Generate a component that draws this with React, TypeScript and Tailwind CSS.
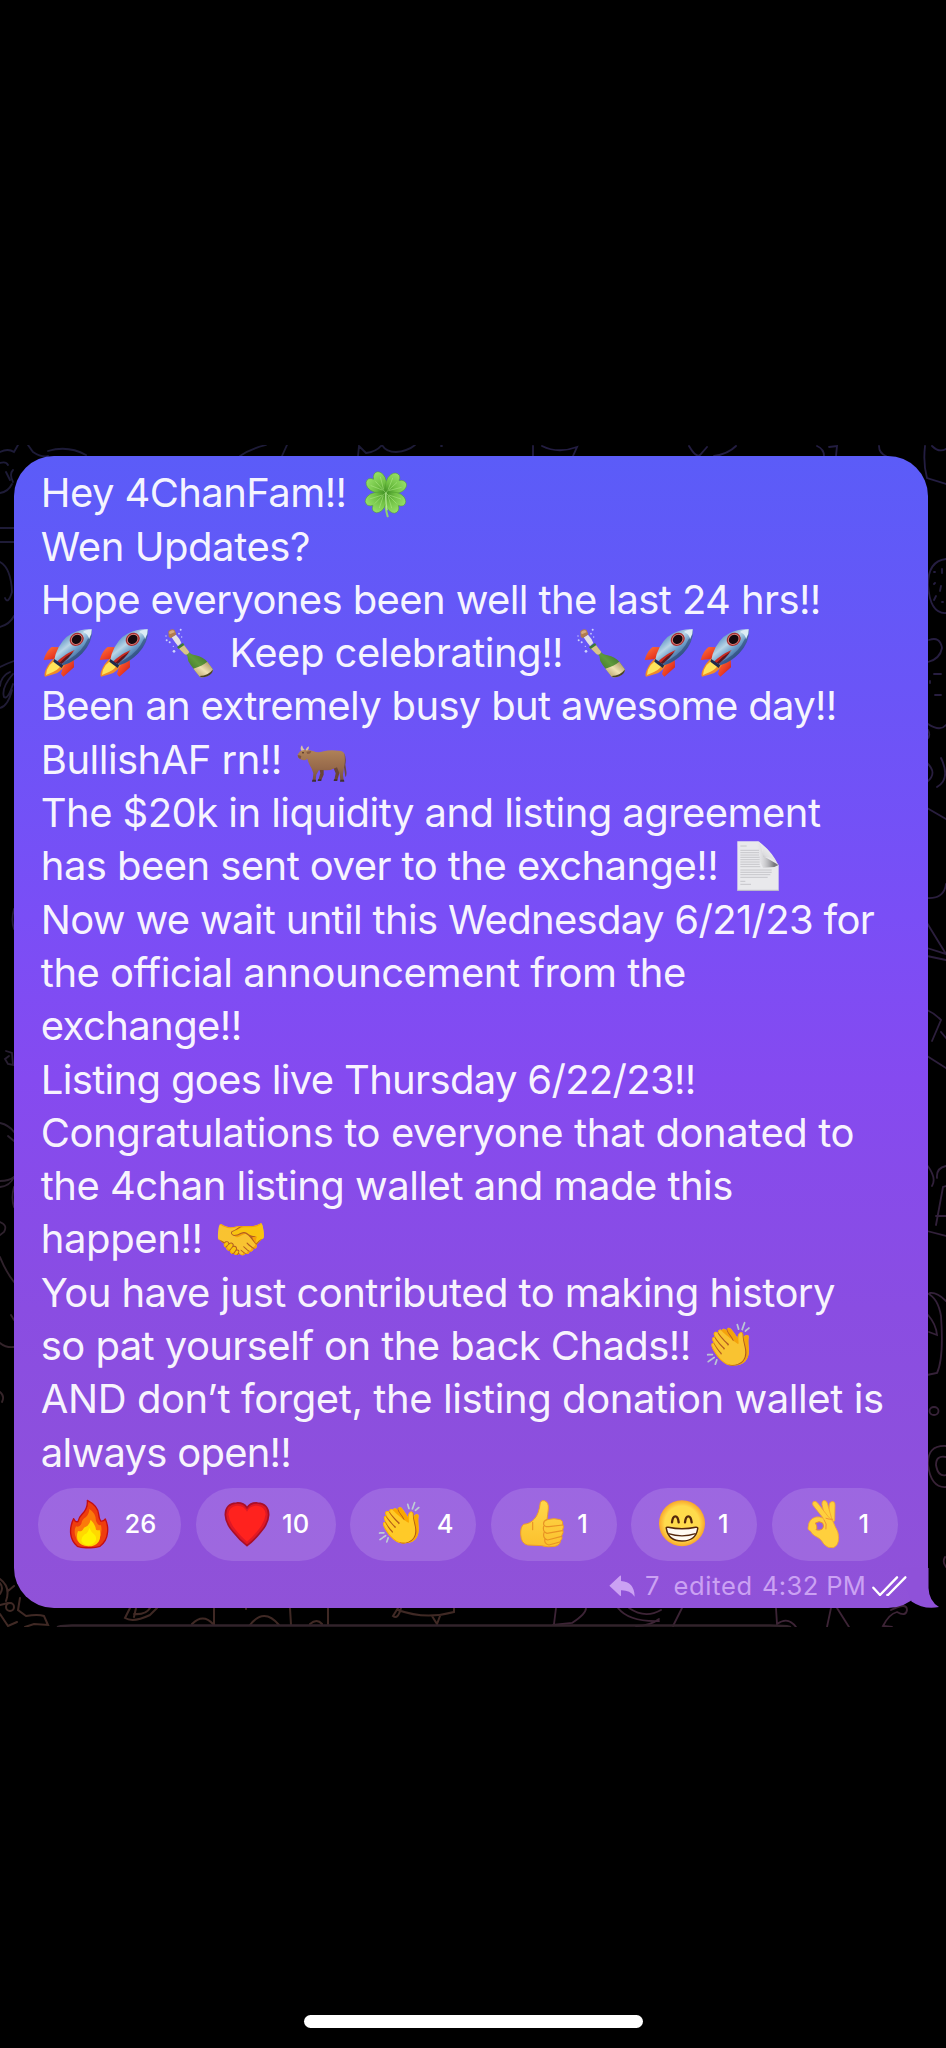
import type { ReactNode } from "react";
import clsx from "clsx";

type IconProps = { className?: string };

function Emoji({ char, className }: { char: string; className?: string }) {
  return (
    <span
      className={clsx(
        "flex h-[50px] w-[50px] shrink-0 items-center justify-center font-['Noto_Color_Emoji',sans-serif] text-[41px] leading-none",
        className,
      )}
    >
      {char}
    </span>
  );
}

function Glyph({ className, children }: IconProps & { children: ReactNode }) {
  return (
    <svg viewBox="0 0 150 150" className={clsx("h-[50px] w-[50px] shrink-0", className)}>
      {children}
    </svg>
  );
}

function Clover({ className }: IconProps) {
  return (
    <Glyph className={className}>
      <defs>
        <radialGradient id="leaf" cx="0.5" cy="1" r="1">
          <stop offset="0" stopColor="#3f8f22" />
          <stop offset="0.45" stopColor="#6fc043" />
          <stop offset="1" stopColor="#93de64" />
        </radialGradient>
      </defs>
      <path d="M75 74Q70 115 80 145" stroke="#8fd46a" strokeWidth="6" strokeLinecap="round" fill="none" />
      {["rotate(-42 74 74)", "rotate(48 74 74)", "rotate(135 74 74)", "rotate(-135 74 74)"].map((t) => (
        <g key={t} transform={t}>
          <path d="M74 74Q42 52 44 26Q48 6 64 9Q71 12 74 20Q78 12 86 9Q102 6 105 26Q106 52 74 74Z" fill="url(#leaf)" stroke="#4d9c2c" strokeWidth="1.5" />
          <path d="M74 72V28M72 62L55 28M76 62L94 28" stroke="#b5ee8c" strokeWidth="2" opacity="0.7" />
        </g>
      ))}
      <path d="M75 74Q73 100 78 125" stroke="#b4e894" strokeWidth="4" strokeLinecap="round" fill="none" />
    </Glyph>
  );
}

function Rocket({ className }: IconProps) {
  return (
    <Glyph className={className}>
      <defs>
        <linearGradient id="hull" x1="0.25" y1="0.2" x2="0.75" y2="0.8">
          <stop offset="0" stopColor="#5d93c4" />
          <stop offset="0.35" stopColor="#b9d5e6" />
          <stop offset="0.6" stopColor="#6fa0cb" />
          <stop offset="1" stopColor="#2b4d86" />
        </linearGradient>
        <linearGradient id="fin" x1="0" y1="0" x2="1" y2="1">
          <stop offset="0" stopColor="#ff7a3c" />
          <stop offset="0.6" stopColor="#ea3a22" />
          <stop offset="1" stopColor="#a81e18" />
        </linearGradient>
      </defs>
      <path d="M2 96Q10 68 26 57L62 58L36 93Z" fill="url(#fin)" />
      <path d="M92 88L93 118L61 146L54 138L62 110Z" fill="url(#fin)" />
      <path d="M33 92L62 98L65 112Q52 134 34 138L6 146Q2 140 8 126Q17 104 33 92Z" fill="#f08b28" />
      <path d="M36 97L58 103Q50 125 30 132L9 141Q10 124 20 111Z" fill="#ffe35a" />
      <path d="M146 4Q118 1 88 16Q55 32 38 78L34 95L60 112Q104 98 128 62Q148 34 146 4Z" fill="url(#hull)" />
      <path d="M146 4Q150 42 118 76Q92 102 60 112L58 104Q104 84 124 52Q138 30 146 4Z" fill="#274172" opacity="0.55" />
      <path d="M146 4Q126 6 120 12Q136 18 138 34Q147 20 146 4Z" fill="#dcecf5" />
      <path d="M95 66Q78 88 45 110L39 104Q62 80 95 66Z" fill="#c9281f" />
      <path d="M92 71Q76 92 56 108L50 104Q68 84 92 71Z" fill="#5b1620" />
      <path d="M34 93L61 112L56 120L31 101Z" fill="#1f2a4c" />
      <ellipse cx="101" cy="34" rx="22" ry="19" transform="rotate(-35 101 34)" fill="#a92e30" />
      <ellipse cx="101" cy="34" rx="18" ry="15" transform="rotate(-35 101 34)" fill="#e28f84" />
      <ellipse cx="101" cy="34" rx="15.5" ry="13" transform="rotate(-35 101 34)" fill="#15090e" />
    </Glyph>
  );
}

function Bottle({ className }: IconProps) {
  return (
    <Glyph className={className}>
      <defs>
        <linearGradient id="glass" x1="0" y1="1" x2="1" y2="0">
          <stop offset="0" stopColor="#1f4a1b" />
          <stop offset="0.5" stopColor="#5f9a3c" />
          <stop offset="1" stopColor="#1f4a1b" />
        </linearGradient>
        <linearGradient id="label" x1="0" y1="1" x2="1" y2="0">
          <stop offset="0" stopColor="#a8905a" />
          <stop offset="0.5" stopColor="#efe2b2" />
          <stop offset="1" stopColor="#9c8450" />
        </linearGradient>
      </defs>
      <path d="M38 58 L54 47 L70 70 Q77 80 92 82 Q114 86 128 103 L143 123 Q146 130 132 141 Q112 152 104 146 L77 111 Q67 98 67 84 Q63 80 57 76Z" fill="url(#glass)" />
      <path d="M38 58 L54 47 L73 72 Q67 84 58 78Z" fill="#d8c48a" />
      <path d="M36 57 L54 45 L58 51 L41 63Z" fill="#3c7a34" />
      <path d="M85 122 Q111 114 127 101 L143 123 Q145 131 131 142 Q112 152 104 146Z" fill="url(#label)" />
      <path d="M104 144 Q130 142 143 125 Q145 136 127 145 Q109 151 104 144Z" fill="#4d4425" />
      <path d="M20 28 L33 20 Q45 32 49 45 L39 54 Q28 41 20 28Z" fill="#e4e1e5" />
      <path d="M10 10 Q19 0 29 6 L34 19 L17 31 L11 26Z" fill="#b07a4e" />
      <path d="M12 12 Q20 4 27 8 L29 13 L14 19Z" fill="#d7aa7c" />
      <g fill="#cdd3fb">
        <circle cx="47" cy="5" r="3" /><circle cx="42" cy="17" r="2.5" /><circle cx="50" cy="27" r="2" />
        <circle cx="5" cy="37" r="3" /><circle cx="14" cy="43" r="3" /><circle cx="27" cy="70" r="4" />
        <circle cx="25" cy="55" r="2" /><circle cx="3" cy="24" r="2" />
      </g>
    </Glyph>
  );
}

function Ox({ className }: IconProps) {
  return (
    <Glyph className={className}>
      <defs>
        <linearGradient id="hide" x1="0" y1="0" x2="0" y2="1">
          <stop offset="0" stopColor="#b08258" />
          <stop offset="0.6" stopColor="#96694a" />
          <stop offset="1" stopColor="#77503b" />
        </linearGradient>
      </defs>
      <path d="M66 100L70 118L64 138H73L80 122V98ZM108 98L116 118L112 138H121L127 118V96Z" fill="#6a4535" />
      <path d="M141 58Q149 70 145 92L148 112Q150 124 145 129L141 100Z" fill="#6f4a3a" />
      <path d="M3 60Q8 50 18 48Q36 46 50 52Q62 58 80 52Q100 46 124 50Q143 50 143 64Q145 84 141 100L138 122L140 139H130L128 120L120 100Q98 112 78 108L66 108L58 122L56 139H47L49 118L44 104Q34 88 31 74Q22 84 6 73Q0 68 3 60Z" fill="url(#hide)" />
      <path d="M13 50Q8 42 15 34Q17 43 23 48ZM30 50Q37 46 36 37Q29 39 26 47Z" fill="#d9c3a4" />
      <path d="M2 64Q8 62 13 67L11 74Q4 75 2 64Z" fill="#7d5443" />
      <path d="M28 53L43 51Q41 61 31 60Z" fill="#875b42" />
      <circle cx="18" cy="56" r="2.2" fill="#2a1711" />
      <path d="M46 137H57V143H45ZM130 137H141L142 143H129ZM63 136H73V141H62ZM111 136H121V141H110Z" fill="#40302e" />
    </Glyph>
  );
}

function Page({ className }: IconProps) {
  return (
    <svg viewBox="0 0 126 150" className={clsx("h-[50px] w-[42px] shrink-0", className)}>
      <defs>
        <linearGradient id="curl" x1="0.1" y1="1" x2="0.7" y2="0.2">
          <stop offset="0" stopColor="#8d8d93" />
          <stop offset="0.5" stopColor="#dddde0" />
          <stop offset="1" stopColor="#f8f8f8" />
        </linearGradient>
        <linearGradient id="shade" x1="1" y1="0.7" x2="0.1" y2="0.7">
          <stop offset="0.2" stopColor="#77777c" />
          <stop offset="1" stopColor="#e6e6e8" stopOpacity="0" />
        </linearGradient>
      </defs>
      <path d="M1 1H64Q92 20 125 73V149H1Z" fill="#e9e9ec" />
      <g stroke="#b5b5ba" strokeWidth="2">
        <path d="M10 15H29M10 28H66M10 35H66M10 42H66M10 49H68M10 56H68M10 63H68M10 70H68M10 77H70M10 87H104M10 94H104M10 101H100M10 109H92M10 121H25M10 130H42" />
      </g>
      <path d="M50 1H68L80 46L125 72L112 78L78 80Q60 50 50 1Z" fill="url(#shade)" />
      <path d="M62 1Q80 12 78 48Q110 46 125 74Q102 26 62 1Z" fill="url(#curl)" />
      <path d="M1 148H125" stroke="#b9b9c3" strokeWidth="3" />
    </svg>
  );
}

function Fire() {
  return (
    <Glyph>
      <path d="M70 4Q102 20 104 46Q105 58 110 66Q118 68 124 60Q134 82 130 104Q128 126 108 142Q94 147 73 146Q52 147 40 142Q22 126 20 104Q18 80 29 59Q34 70 42 68Q44 56 54 46Q72 28 70 4Z" fill="#ee3d0e" stroke="#c40e12" strokeWidth="4" strokeLinejoin="round" />
      <path d="M76 30Q96 42 96 66Q103 82 111 78Q116 104 104 124Q96 140 73 142Q40 140 33 108Q30 92 36 82Q46 86 52 74Q54 60 66 54Q76 44 76 30Z" fill="#fb7a0b" />
      <path d="M80 62Q94 76 96 92Q104 96 107 92Q112 114 104 128Q94 142 73 142Q50 141 42 126Q36 112 42 96Q54 100 60 86Q76 82 80 62Z" fill="#ffd800" />
      <path d="M76 86Q82 100 90 106Q98 112 96 124Q90 138 73 139Q54 138 52 124Q54 112 62 106Q72 104 76 86Z" fill="#fff200" />
    </Glyph>
  );
}

function Heart() {
  return (
    <Glyph>
      <path d="M75 26Q86 10 107 12Q139 14 140 47Q139 74 116 99Q98 122 75 140Q52 122 34 99Q11 74 10 47Q11 14 43 12Q64 10 75 26Z" fill="#df1825" stroke="#a90f27" strokeWidth="5" />
      <path d="M75 38Q84 19 105 20Q129 22 131 46Q128 70 108 94Q94 112 75 128Q56 112 42 94Q22 70 19 46Q21 22 45 20Q66 19 75 38Z" fill="#ff221e" />
    </Glyph>
  );
}

function Thumb() {
  return (
    <Glyph>
      <defs>
        <linearGradient id="skin" x1="0" y1="0" x2="0" y2="1">
          <stop offset="0" stopColor="#ffd84a" />
          <stop offset="1" stopColor="#fbc02d" />
        </linearGradient>
      </defs>
      <path d="M70 10Q74 3 82 5Q96 9 94 30Q92 48 90 62Q112 56 130 62Q139 66 137 76Q142 83 137 92Q141 100 134 110Q138 118 130 126Q130 138 114 142Q92 146 74 140L32 138Q12 134 11 106Q10 84 20 76Q40 74 52 60Q66 46 70 10Z" fill="url(#skin)" stroke="#ee9b2b" strokeWidth="3" />
      <path d="M47 70V92M90 62Q78 66 80 76Q82 84 96 83L137 78M80 82Q76 98 90 103L136 95M81 101Q76 118 92 123L134 112M84 119Q80 134 96 138L128 129" fill="none" stroke="#e89324" strokeWidth="3.5" strokeLinecap="round" />
    </Glyph>
  );
}

function Grin() {
  return (
    <Glyph>
      <defs>
        <radialGradient id="face">
          <stop offset="0.75" stopColor="#ffdb4c" />
          <stop offset="1" stopColor="#f9a62b" />
        </radialGradient>
      </defs>
      <circle cx="75" cy="73" r="69" fill="url(#face)" />
      <path d="M45 70Q47 52 55 52Q63 52 65 70M84 70Q86 52 94 52Q102 52 104 70" fill="none" stroke="#54270b" strokeWidth="7" strokeLinecap="round" />
      <path d="M28 88Q26 84 34 85Q75 94 116 85Q124 84 122 90Q116 126 75 126Q34 126 28 88Z" fill="#fffaf2" stroke="#54270b" strokeWidth="4.5" strokeLinejoin="round" />
      <path d="M34 104Q75 117 116 104" fill="none" stroke="#54270b" strokeWidth="4" />
    </Glyph>
  );
}

function Okay() {
  return (
    <Glyph>
      <g fill="#ffd03d" stroke="#f2a32f" strokeWidth="2.5" strokeLinejoin="round">
        <path d="M101 8Q111 6 111 18L110 66L90 70L94 16Q95 9 101 8Z" />
        <path d="M76 5Q84 2 88 12L103 66L84 72L72 16Q71 8 76 5Z" />
        <path d="M46 8Q53 4 59 12L90 52Q108 66 112 84Q122 98 122 116Q122 140 106 146Q90 149 78 136Q70 118 50 110Q42 106 38 97Q26 92 31 82Q32 60 54 54Q66 52 76 58L45 19Q42 12 46 8Z" />
      </g>
      <path d="M52 72Q64 64 74 72Q80 82 73 90Q64 96 54 92Q60 86 52 72Z" fill="#985fdd" stroke="#eb982b" strokeWidth="3" />
      <path d="M84 58Q94 62 104 61M78 62Q88 74 84 90" fill="none" stroke="#ef8f35" strokeWidth="3" strokeLinecap="round" />
    </Glyph>
  );
}

function Line({ children }: { children: ReactNode }) {
  return <div className="flex h-[53.3px] items-center whitespace-pre">{children}</div>;
}

const pills = [
  { id: "fire", icon: <Fire />, count: 26, width: "w-[143px]" },
  { id: "heart", icon: <Heart />, count: 10, width: "w-[140px]" },
  { id: "clap", icon: <Emoji char="👏" />, count: 4, width: "w-[126px]" },
  { id: "thumb", icon: <Thumb />, count: 1, width: "w-[126px]" },
  { id: "grin", icon: <Grin />, count: 1, width: "w-[126px]" },
  { id: "okay", icon: <Okay />, count: 1, width: "w-[126px]" },
];

function Wallpaper() {
  return (
    <svg viewBox="0 445 946 1182" className="absolute inset-0 h-full w-full" fill="none">
      <defs>
        <linearGradient id="ink" gradientUnits="userSpaceOnUse" x1="0" y1="445" x2="0" y2="1627">
          <stop offset="0" stopColor="#1d1b38" />
          <stop offset="0.45" stopColor="#241d33" />
          <stop offset="1" stopColor="#402924" />
        </linearGradient>
        <linearGradient id="ink2" gradientUnits="userSpaceOnUse" x1="0" y1="445" x2="0" y2="1627">
          <stop offset="0" stopColor="#231d42" />
          <stop offset="0.5" stopColor="#2d1f3d" />
          <stop offset="1" stopColor="#3d2436" />
        </linearGradient>
      </defs>
      <g stroke="url(#ink)" strokeWidth="1.8" strokeLinecap="round">
        <path d="M0 452Q8 448 14 452L18 445M28 445L33 452Q42 458 48 456M48 451Q68 445 86 455M0 463Q6 461 8 465M6 472L10 480M13 470Q9 474 13 482M0 493Q8 492 12 484M0 528H14M0 542H14M0 562Q11 568 12 592Q8 605 5 598M0 627Q10 624 14 616M0 667Q8 663 14 661M0 686Q1 676 10 672M13 674Q1 688 4 697Q8 700 13 684M0 708Q8 706 12 690" />
        <path d="M240 456Q250 449 266 445M282 456L287 445M358 456L359 446L366 453Q376 452 382 445Q386 452 396 452Q408 451 415 445M441 446L442 446" />
        <path d="M14 909Q11 920 14 929M6 1051L12 1053L13 1065L8 1064L5 1059L9 1056M0 1123Q9 1125 14 1132M8 1136L14 1141M0 1187Q10 1186 14 1177M0 1181Q9 1181 14 1177M14 1187Q11 1198 14 1207M0 1222Q8 1225 4 1232L0 1235M0 1257Q6 1272 14 1282M11 1315L14 1320M0 1343Q6 1348 14 1347M0 1392Q5 1396 2 1402" />
      </g>
      <g stroke="url(#ink2)" strokeWidth="1.8" strokeLinecap="round">
        <path d="M533 446V456M542 446Q558 454 577 447L573 456M689 446Q696 458 700 455L707 447M714 456Q728 454 736 446M817 446Q824 449 824 456M829 447L837 446L836 456M879 446Q879 453 886 456M925 446Q923 464 927 478L946 484M932 446Q939 453 946 449" />
        <path d="M946 559Q928 561 928 585Q930 614 946 613M934 572L935 572M942 569L942 573M934 584L935 583M941 586L940 591M934 600L936 596M942 602L943 602M929 640Q940 636 942 648Q940 659 928 662M934 674H941M930 681V683M935 695H941M928 724Q940 732 946 725M928 730Q931 736 927 739M927 763Q938 773 927 782M941 758Q951 779 937 787M927 808L946 819M946 884Q944 899 927 898M927 923L946 954L927 948M927 956L946 960M927 1010Q934 1013 941 1020L932 1041M927 1056L946 1068M941 1032L946 1038" />
        <path d="M927 1165Q937 1178 932 1186M946 1166Q936 1168 937 1178M936 1225L943 1187L946 1186M936 1216H946M927 1231L946 1236M927 1293Q938 1298 941 1316Q944 1358 937 1373L927 1375M928 1315Q936 1324 937 1335L929 1332M946 1301Q937 1292 930 1293M946 1446Q927 1445 928 1465Q931 1488 946 1487M946 1457Q936 1455 936 1465Q938 1477 946 1475" />
        <ellipse cx="934" cy="1411" rx="4.5" ry="4" />
        <path d="M945 1557Q942 1562 946 1567M556 1608L554 1624M586 1608Q586 1614 572 1623L553 1625M618 1608Q629 1622 659 1621M629 1608Q645 1619 661 1610M636 1626Q650 1626 659 1619M682 1608L673 1626M776 1608L777 1624Q788 1616 796 1627M831 1608L827 1627M837 1608L849 1627M891 1610Q907 1602 907 1610Q906 1617 897 1612Q889 1614 883 1626L892 1627" />
      </g>
      <g stroke="url(#ink)" strokeWidth="2" strokeLinecap="round">
        <path d="M0 1579Q11 1587 6 1601M0 1583Q4 1588 0 1594M8 1591L14 1586M0 1605L8 1603M20 1598L18 1610L26 1616Q38 1614 44 1616L48 1625L34 1624L25 1627M0 1614L8 1626L17 1622M130 1608L125 1618Q133 1623 150 1615L157 1608M136 1608L134 1617M134 1614Q146 1615 150 1608M192 1624Q203 1613 213 1624M214 1608V1625M246 1608V1609M250 1625Q264 1607 279 1625M290 1608L291 1625M328 1608V1624M310 1624Q317 1618 322 1624M398 1608L393 1616Q398 1620 401 1608M398 1610Q425 1620 454 1612V1608M432 1616L437 1624L440 1616" />
        <circle cx="10" cy="1607" r="4" />
        <path d="M58 1627Q63 1625.5 72 1625.5H770Q785 1625.5 790 1627" stroke="#32232b" strokeWidth="2.5" />
      </g>
    </svg>
  );
}

export default function App() {
  return (
    <main className="flex h-[2048px] w-[946px] flex-col overflow-hidden bg-black font-[Inter,'Liberation_Sans',sans-serif]">
      <section className="relative mt-[445px] h-[1182px] shrink-0 overflow-hidden pt-[11px] pl-[14px]">
        <Wallpaper />
        <div className="relative h-[1152px] w-[913.5px] rounded-[40px] bg-linear-[180deg,#5b5cf8_0%,#6a55f7_20%,#7a4ef6_40%,#854af0_54%,#8a4de2_74%,#9052d8_100%] pt-[10.3px] pl-[26.8px]">
          <svg viewBox="0 0 60 40" className="absolute -right-[11px] bottom-0 h-10 w-[60px]">
            <path d="M49.5 0V20Q50 33 60 39Q45 42 32.5 33.5L20 0Z" fill="#8f51d9" />
          </svg>
          <div className="relative text-[40px] leading-[53.3px] text-white/95">
            <Line><span className="tracking-[-0.59px]">Hey 4ChanFam!!</span><Clover className="ml-[15px]" /></Line>
            <Line><span className="tracking-[-0.43px]">Wen Updates?</span></Line>
            <Line><span className="tracking-[-0.61px]">Hope everyones been well the last 24 hrs!!</span></Line>
            <Line>
              <Rocket className="ml-[2.5px]" />
              <Rocket className="ml-[5.7px]" />
              <Bottle className="ml-[16px]" />
              <span className="ml-[14.5px] w-[334px] tracking-[-0.51px]">Keep celebrating!!</span>
              <Bottle className="ml-[14px]" />
              <Rocket className="ml-[17px]" />
              <Rocket className="ml-[6px]" />
            </Line>
            <Line><span className="tracking-[-0.67px]">Been an extremely busy but awesome day!!</span></Line>
            <Line><span className="tracking-[-0.53px]">BullishAF rn!!</span><Ox className="ml-[15px]" /></Line>
            <Line><span className="tracking-[-0.56px]">The $20k in liquidity and listing agreement</span></Line>
            <Line><span className="tracking-[-0.56px]">has been sent over to the exchange!!</span><Page className="ml-[19px]" /></Line>
            <Line><span className="tracking-[-0.69px]">Now we wait until this Wednesday 6/21/23 for</span></Line>
            <Line><span className="tracking-[-0.5px]">the official announcement from the</span></Line>
            <Line><span className="tracking-[-0.6px]">exchange!!</span></Line>
            <Line><span className="tracking-[-0.68px]">Listing goes live Thursday 6/22/23!!</span></Line>
            <Line><span className="tracking-[-0.44px]">Congratulations to everyone that donated to</span></Line>
            <Line><span className="tracking-[-0.52px]">the 4chan listing wallet and made this</span></Line>
            <Line><span className="tracking-[-0.4px]">happen!!</span><Emoji char="🤝" className="ml-[13px] text-[43px]!" /></Line>
            <Line><span className="tracking-[-0.56px]">You have just contributed to making history</span></Line>
            <Line><span className="tracking-[-0.58px]">so pat yourself on the back Chads!!</span><Emoji char="👏" className="ml-[15px] text-[43px]!" /></Line>
            <Line><span className="tracking-[-0.43px]">AND don’t forget, the listing donation wallet is</span></Line>
            <Line><span className="tracking-[-0.75px]">always open!!</span></Line>
          </div>
          <div className="relative -ml-[2.8px] mt-[9px] flex gap-[14.6px]">
            {pills.map((p) => (
              <div key={p.id} className={clsx("flex h-[73px] shrink-0 items-center gap-[10.5px] rounded-full bg-white/13 pl-[26px]", p.width)}>
                {p.icon}
                <span className="text-[25.5px] font-medium text-white">{p.count}</span>
              </div>
            ))}
          </div>
          <div className="relative mt-[9px] mr-[20.5px] flex h-[32px] items-center justify-end whitespace-pre text-[25.5px] leading-8 text-[#cba1f3]">
            <svg viewBox="0 0 78 66" className="mr-[10px] h-[22px] w-[26px]" fill="#cba1f3">
              <path d="M1 32L33 2Q36 0 36 4V18Q76 20 77 65Q62 45 36 46V61Q36 65 33 62Z" />
            </svg>
            <span className="mr-[14px]">7</span>
            <span className="mr-[9px] tracking-[0.7px]">edited</span>
            <span className="tracking-[0.4px]">4:32 PM</span>
            <svg viewBox="0 0 104 62" className="ml-[6px] h-[20.7px] w-[34.7px]" fill="none" stroke="white" strokeWidth="7" strokeLinecap="round" strokeLinejoin="round">
              <path d="M4 35L24 57L75 4M46 57L48 57L100 4" />
            </svg>
          </div>
        </div>
      </section>
      <div className="mt-[388px] ml-[304px] h-[13px] w-[338.5px] shrink-0 rounded-full bg-white" />
    </main>
  );
}
